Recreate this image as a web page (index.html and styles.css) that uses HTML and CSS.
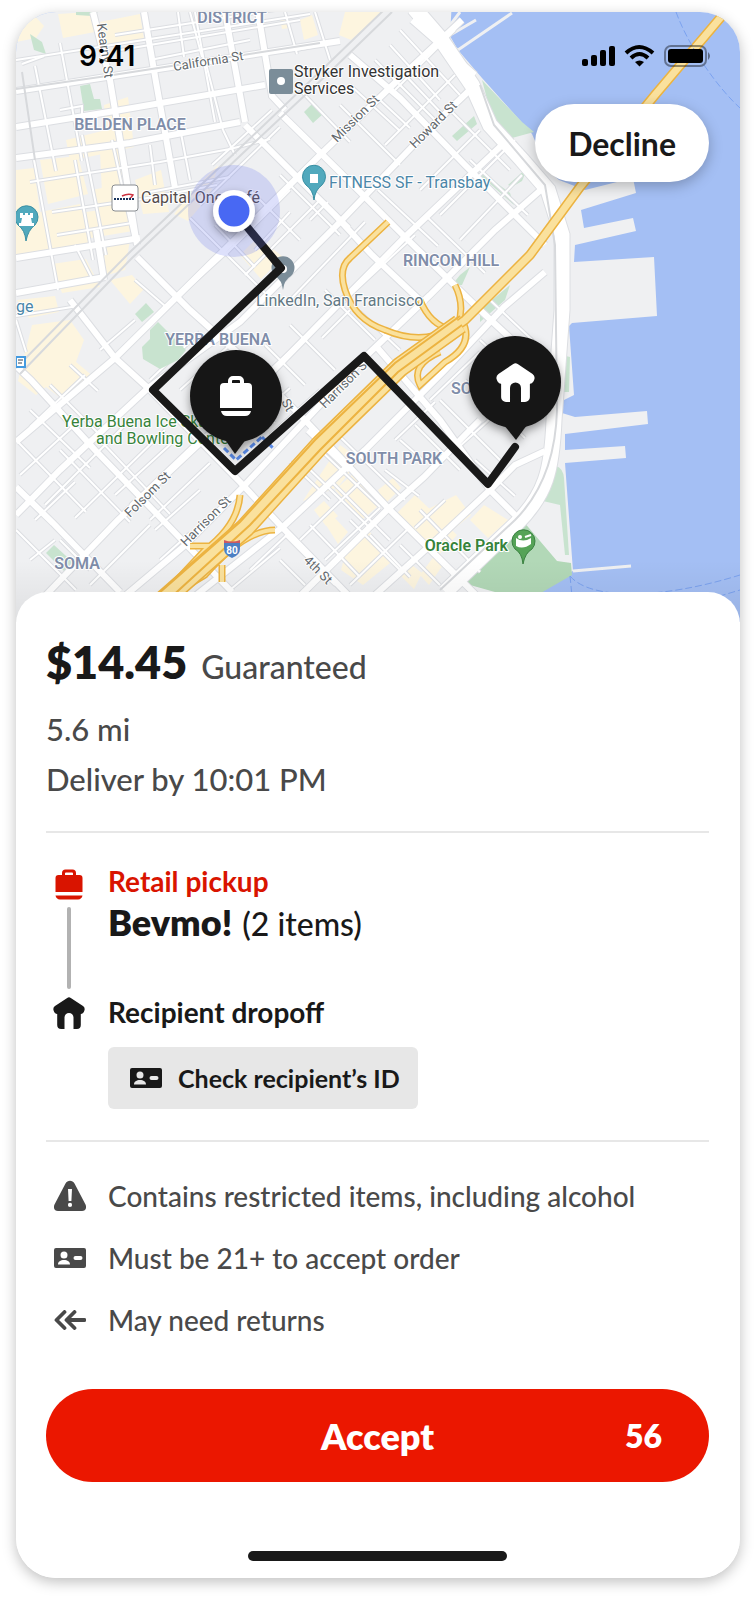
FILE: index.html
```html
<!DOCTYPE html>
<html lang="en">
<head>
<meta charset="utf-8">
<meta name="viewport" content="width=device-width, initial-scale=1">
<title>Delivery offer</title>
<link rel="stylesheet" href="styles.css">
</head>
<body>
<svg class="sprite" aria-hidden="true">
  <symbol id="bag" viewBox="0 0 32 32">
    <path d="M2.500 23V9a3 3 0 0 1 3-3h3.500V4a3.500 3.500 0 0 1 3.500-3.500h7A3.500 3.500 0 0 1 23 4v2h3.500a3 3 0 0 1 3 3v14ZM12 6h8V4.500a1 1 0 0 0-1-1h-6a1 1 0 0 0-1 1ZM2.500 26.500h27a5 5 0 0 1-4.500 4H7a5 5 0 0 1-4.500-4Z" fill="currentColor" fill-rule="evenodd"/>
  </symbol>
  <symbol id="home" viewBox="0 0 32 32">
    <path d="M14.200.9a3 3 0 0 1 3.600 0L30 9a4 4 0 0 1 1.400 4.500C30.800 15.500 29.500 17 27.800 17v11a4 4 0 0 1-4 4H20.500V20.500a4.500 4.500 0 0 0-9 0V32H8.200a4 4 0 0 1-4-4V17C2.500 17 1.200 15.500.6 13.500A4 4 0 0 1 2 9Z" fill="currentColor"/>
  </symbol>
  <symbol id="card" viewBox="0 0 32 20">
    <path d="M2 0h28a2 2 0 0 1 2 2v16a2 2 0 0 1-2 2H2a2 2 0 0 1-2-2V2a2 2 0 0 1 2-2ZM10 3.500a3.500 3.500 0 1 0 0 7a3.500 3.500 0 0 0 0-7ZM4 16.500h12c0-3-2.500-4.500-6-4.500s-6 1.500-6 4.500ZM21.500 8a2 2 0 0 0 0 4h5a2 2 0 0 0 0-4Z" fill="currentColor" fill-rule="evenodd"/>
  </symbol>
  <symbol id="warn" viewBox="0 0 32 32">
    <path d="M11.500 3.500C13.500-.2 18.500-.2 20.500 3.500L31.500 24.500C33 28 31.500 31 28 31H4C.5 31-1 28 .5 24.500ZM14 9l.6 12h2.800L18 9ZM16 22.800a2.100 2.100 0 1 0 0 4.200a2.100 2.100 0 0 0 0-4.200Z" fill="currentColor" fill-rule="evenodd"/>
  </symbol>
  <symbol id="return" viewBox="0 0 32 20">
    <path d="M10.500 2 2.500 10l8 8M20.500 2 12.500 10l8 8M13 10h17.500" fill="none" stroke="currentColor" stroke-width="3.800" stroke-linecap="round" stroke-linejoin="round"/>
  </symbol>
</svg>

<main class="phone">
  <section class="map" aria-label="Delivery route map">
    <svg class="map-art" viewBox="16 12 724 610" preserveAspectRatio="xMidYMin slice" role="img" aria-label="Route through San Francisco">
      <defs>
        <g id="thin">
          <path d="M16 60 150 39 310 14M16 220l20-4M30 182l130-20 70-13 40-10M150 192l80-15M52 212l90-13 75-14M57 235l75-12M16 316l62-10M16 320l10 32M180 128l10 52M205 60l18 70M190 12l12 45M285 12l12 42M150 60l100-20M115 35l160-25M120 50l180-30"/>
          <path d="M60 43l22 118M35 66l21 105M82 135l24 120M34 160l24 130M112 140l22 100M150 145l5 40M22 64l22-8M60 110l22-4 0 12M75 160l18 100M195 12l20 110M178 12l6 45M315 12l15 48M296 50l16-3M75 245l18 35"/>
          <path d="M212 165l60-55M200 205l80-78M225 255l65-65M245 275l75-75M290 300l75-78M255 250l35-38M175 300l60-55M310 220l18-18M345 300l70-65M395 90l60-60M385 145l70-70M420 190l60-60M440 215l75-75M460 240l62-65M380 100l30 28M405 75l40 42M350 85l50 46M300 90l50 52M430 130l60 60M450 110l60 60M470 160l58 55M425 215l60 58M378 190l60 56"/>
          <path d="M235 155l-12-25M210 195l70 70M190 218l75 75M215 225l40 42M250 190l50 50M280 175l60 60M135 280l30 26M340 105l60 60M375 60l60 60M390 45l50 55M400 30l60 65M275 155l75 72"/>
          <path d="M85 375l-55 52M130 420l-85 85M165 430l-90 88M70 365l28 26M50 385l50 50M30 410l60 58M16 440l70 72M100 440l70 74M115 495l60-55M130 505l65-62M150 520l60-57M155 530l45-40M180 390l50-45M195 405l40-36M100 350l35-30M150 380l50-48M60 450l70 72M20 475l60-55M35 520l40-38M90 585l60-60M160 560l30-27M60 540l30 30M16 530l60 60M30 560l25-20"/>
          <path d="M290 325l45 45M265 345l40 40M320 390l-50 45M270 370l48-45M225 375l50 48M350 310l-28 28M375 340l-50-50M400 350l-40-38M230 440l60-52"/>
          <path d="M315 445l65 62M335 432l70 68M300 460l68 66M330 500l-40-38M350 520l50 50M370 535l40 42M300 540l60-58M325 560l55-52M350 585l60-58M285 535l50 50M310 525l50 52M330 480l60 60M385 470l34 26M400 440l25 22M420 510l60 62M400 545l40 40M445 500l-30 28M460 520l-30 30M475 460l40 36M440 400l60 60M465 380l60 58M460 470l-45-45M405 400l60 60M480 340l60 56M490 300l55 52M500 410l-40 36M430 400l50-48M395 440l40-38M250 570l40-38M230 590l50-42M280 560l25 25"/>
        </g>
        <g id="wide">
          <path d="M16 91 100 78 210 61 340 41M16 127 115 111 265 85M16 158 130 143 240 122M16 258 140 238M16 293 105 277"/>
          <path d="M93 12 110 80 125 170 137 245M144 12 156 82 175 188M225 12 245 122M258 12 272 96 285 110M96 230l8 50"/>
          <path d="M16 442 115 358 210 264 320 155 400 78 462 20M16 515 60 470 148 388 240 322 340 222 430 128 475 85M45 596 118 520 235 410 320 323 405 237 502 145M120 600 183 547 243 487 365 357 430 295 495 230 543 188M190 600 285 525 365 450 445 370 504 307 545 272M298 598 387 510 424 477 467 433 480 420M375 595 444 533 490 490 515 465 545 451"/>
          <path d="M70 300 115 358 148 388 240 482 280 525 350 597M16 366 31 380 95 450 155 512 232 592M16 487 53 523 120 592M137 257 190 310 240 355 305 420 390 510 478 597M245 125 335 215 372 255 425 305M280 113 340 172 405 237 480 310 548 373M350 55 400 98 465 165 545 245M308 430 350 470M375 345 440 420 490 490 515 515M412 20 475 75"/>
        </g>
        <path id="embarcadero" d="M414 8 440 38 472 85 490 125 522 160 548 190 562 235 562 310 554 420C552 470 546 495 515 525L445 592"/>
        <path id="freeway" d="M160 603 245 528 320 445 400 367 465 320 530 255 580 187 655 95 727 10"/>
        <path id="ramps" d="M240 495Q238 525 205 550L165 593M275 530Q245 530 205 575L155 605M190 546H228M222 565V582M388 222 350 258Q338 268 345 290Q355 320 385 330Q420 345 450 330M420 300Q430 325 452 330M455 285Q465 305 458 325M462 320Q475 345 445 362L420 385Q410 365 440 352"/>
        <filter id="pinShadow" x="-40%" y="-40%" width="180%" height="190%">
          <feDropShadow dx="0" dy="4" stdDeviation="5" flood-color="#000" flood-opacity=".4"/>
        </filter>
        <linearGradient id="fade" x1="0" y1="0" x2="0" y2="1"><stop offset="0" stop-opacity="0"/><stop offset="1" stop-opacity=".07"/></linearGradient>
      </defs>

      <path class="water" d="M0 0H755V640H0Z"/>
      <path class="land" d="M0 0H452L450 36 458 50 482 78 532 134 548 170 559 180 585 190 633 178 636 193 581 210 584 228 633 218 636 231 575 245 574 262 654 257 657 316 572 323 569 326 574 395 562 401V413L575 417 647 411 648 424 565 434V450L625 446 626 458 565 463 573 571 540 588 500 640H0Z"/>
      <path class="pier" d="M452 34 476 20M450 45 458 50 512 13M448 28 460 12"/>
      <path class="pier" d="M573 571 631 566"/>

      <path class="shop" d="M16 12h15l13 14-8 12-20 4ZM58 14l32-2 5 20-32 6ZM100 22l40-8 4 25-38 8ZM345 12h38l-32 28-12-5ZM300 20l12-5 6 20-14 5ZM280 18l8-2 2 12-8 1ZM40 160l38-4 10 38-40 10ZM66 140l40-10-2-25 24-8 6 50-64 14ZM16 170l18-2 6 44 40-8 12 40-76 12ZM92 190l38-8 5 38-36 8ZM100 152l20-5 10 42-28 4ZM135 180l26-10 8 42-26 2ZM65 215l70-10-2 26-60 10ZM52 264l34-5 14 28-38 6ZM100 245l30-5-5 30-18 5ZM110 280l22-5 12 14-14 15ZM198 185l20-20-8 30-22 26-14-7ZM17 300l38-4 4 16-30 6ZM32 325l38-5 14 20-8 22 18 15-28 25-20-15-10 8-18-14ZM240 255l18-18 25 20-22 22Z"/>
      <path class="shop" d="M310 490l30-45 20 14-22 28-35 14ZM335 490l20-18 28 30-20 17ZM314 510l10-9 14 15-12 10ZM326 525l8-8 14 15-10 12ZM345 555l20-28 30 32-32 26-22-15ZM378 490l15-12 8 10-16 16ZM395 515l20-20 42 40-22 24ZM426 510l30-15 15 20-22 18ZM470 520l14-15 24 15-20 18ZM420 575l15-20 8 10-14 20ZM400 575l12-10 10 8-8 16ZM522 530l42 38-6 6-42-38Z"/>
      <path class="park" d="M30 34l12 8 4 12-12-4ZM76 12h22l-6 4-16-1ZM80 86l10-2 4 15 6 0 2 10-18 2ZM304 112l9-9 10 11-10 9ZM135 314l11-11 8 9-12 10ZM452 136l22-20 3 8-20 17ZM482 80l40 42 12 10-22 6-20-20ZM508 185l20-18-6 14-10 6ZM478 173l36 32-4-12-24-18ZM460 275l10-8-8 18-10 0ZM480 310l30-25-5 15-25 22ZM566 356l4 1-1 35h-5ZM556 466q7 2 8 12l5 77h-4l-5-50-17-4ZM46 553l8-8 22 20-10 8Z"/>
      <path class="park-dark" d="M523 521l34 40 14 2 1 12-45 26-64-18Z"/>

      <use href="#thin" class="case-thin"/>
      <use href="#wide" class="case-wide"/>
      <use href="#embarcadero" class="case-main"/>
      <use href="#thin" class="road-thin"/>
      <path class="park" d="M150 330l8-8 28 28-8 10-18 9-17-10-1-12 8-8Z"/>
      <use href="#wide" class="road-wide"/>
      <use href="#embarcadero" class="road-main"/>
      <path class="rail" d="M16 89 100 77 210 60 320 43M386 8 330 62 240 148 130 252 16 368M392 12 332 70 242 154 132 258 20 374M480 85 494 125 545 185 555 245 557 410Q555 480 515 520L440 590M22 72 35 160"/>
      <use href="#ramps" class="case-ramp"/>
      <use href="#ramps" class="road-ramp"/>
      <path class="case-free-wide" d="M160 603 245 528 320 445 400 367 460 324"/>
      <use href="#freeway" class="case-free"/>
      <path class="free-wide" d="M160 603 245 528 320 445 400 367 460 324"/>
      <use href="#freeway" class="free"/>
      <path class="free-line" d="M168 600 250 525 320 450 398 372 462 325M158 594 240 522 315 440 395 363 460 316"/>
      <path class="ferry" d="M676 12C690 50 720 90 740 108M570 576C590 600 660 600 740 575M570 576l3 30M690 605l50-15"/>
      <path class="trail" d="M224 448l12 12 26-23M262 437l12 12"/>

      <g class="place">
        <text x="232" y="23" text-anchor="middle">DISTRICT</text>
        <text x="130" y="130" text-anchor="middle">BELDEN PLACE</text>
        <text x="451" y="266" text-anchor="middle">RINCON HILL</text>
        <text x="218" y="345" text-anchor="middle">YERBA BUENA</text>
        <text x="394" y="464" text-anchor="middle">SOUTH PARK</text>
        <text x="451" y="394">SOUTH</text>
        <text x="77" y="569" text-anchor="middle">SOMA</text>
      </g>
      <g class="street">
        <text transform="translate(97 24) rotate(82)">Kearny St</text>
        <text transform="translate(174 71) rotate(-9)">California St</text>
        <text transform="translate(337 143) rotate(-45)">Mission St</text>
        <text transform="translate(415 149) rotate(-45)">Howard St</text>
        <text transform="translate(130 518) rotate(-45)">Folsom St</text>
        <text transform="translate(186 547) rotate(-45)">Harrison St</text>
        <text transform="translate(325 409) rotate(-45)">Harrison St</text>
        <text transform="translate(303 561) rotate(45)">4th St</text>
        <text transform="translate(281 402) rotate(60)">St</text>
      </g>
      <g class="poi">
        <text class="ink" x="294" y="77">Stryker Investigation</text>
        <text class="ink" x="294" y="94">Services</text>
        <text class="brown" x="141" y="203">Capital One Café</text>
        <text class="blue" x="329" y="188">FITNESS SF - Transbay</text>
        <text class="slate" x="256" y="306">LinkedIn, San Francisco</text>
        <text class="green" x="62" y="427">Yerba Buena Ice Skating</text>
        <text class="green" x="96" y="444">and Bowling Center</text>
        <text class="green strong" x="508" y="551" text-anchor="end">Oracle Park</text>
        <text class="blue" x="16" y="312">ge</text>
      </g>

      <rect x="269" y="69" width="24" height="25" rx="2" fill="#7b8d99"/><circle cx="281" cy="81" r="4" fill="#fff"/>
      <rect x="112" y="185" width="26" height="26" rx="3" fill="#fff" stroke="#888c90"/>
      <path d="M122 196q6-3 11-1-1 2-4 4" fill="none" stroke="#cc3340" stroke-width="1.500"/><path d="M114 199h20" stroke="#16325b" stroke-width="2" stroke-dasharray="2 1"/>
      <path class="teal" d="M26 241Q25 230 18 225A11.500 11.500 0 1 1 35 225Q28 230 26 241Z"/>
      <path fill="#fff" d="M20 213h3v2h2v-2h3v2h2v-2h3v5h-2l1 5h2v3H19v-3h2l1-5h-2Z"/>
      <path class="teal" d="M314 200Q313 190 306 185A11.500 11.500 0 1 1 322 185Q315 190 314 200Z"/><path d="M310 174h8v9h-8Z" fill="#fff"/>
      <path d="M283 290Q282 280 275 276A11.500 11.500 0 1 1 291 276Q284 280 283 290Z" fill="#7b8d99"/><circle cx="283" cy="269" r="4" fill="#fff"/>
      <path d="M523 564Q522 553 515 549A11.500 11.500 0 1 1 532 549Q525 553 523 564Z" fill="#55a357" stroke="#398140"/>
      <path d="M516 538q7 5 15 0v6q-8 6-15 2Z" fill="#fff"/><circle cx="520" cy="537" r="2" fill="#fff"/><path d="M525 537l6-2" stroke="#fff" stroke-width="2"/>
      <path d="M16 357h9v10h-9Z" fill="#fff" stroke="#459be0" stroke-width="2"/><path d="M18 360h5M18 363h4" stroke="#345"/>
      <path d="M224 543q8-2 16 0v6q0 6-8 9-8-3-8-9Z" fill="#4b7fc4"/><path d="M224 540q8 3 16 0v3h-16Z" fill="#cc5962"/>
      <text class="shield" x="232" y="554" text-anchor="middle">80</text>

      <rect x="16" y="560" width="724" height="62" fill="url(#fade)"/>
      <path class="route" d="M234 211 281 268 153 390 235 471 364 356 488 484 515 447"/>
      <circle cx="234" cy="211" r="46" fill="#6274ee" fill-opacity=".22"/>
      <circle cx="234" cy="211" r="21" fill="#fff" filter="url(#pinShadow)"/><circle cx="234" cy="211" r="15.500" fill="#4868f3"/>
      <g class="pin" filter="url(#pinShadow)"><circle cx="236" cy="396" r="46"/><path d="M224 438h23l-12 16Z"/></g>
      <g class="pin" filter="url(#pinShadow)"><circle cx="515" cy="382" r="46"/><path d="M504 425h23l-11 15Z"/></g>
      <path d="M220 408V387a4 4 0 0 1 4-4h4v-2a5 5 0 0 1 5-5h6a5 5 0 0 1 5 5v2h4a4 4 0 0 1 4 4v21ZM232 383h8v-2q0-1-1-1h-6q-1 0-1 1ZM221 411h30q-1 5-6 5h-18q-5 0-6-5Z" fill="#fff" fill-rule="evenodd"/>
      <use href="#home" x="496" y="363" width="39" height="39" color="#fff"/>
    </svg>

    <div class="status">
      <time class="clock">9:41</time>
      <svg class="status-icons" viewBox="0 0 130 24" aria-label="Signal, Wi-Fi and battery">
        <rect x="0" y="15" width="6" height="7" rx="2"/><rect x="9" y="11" width="6" height="11" rx="2"/><rect x="18" y="6" width="6" height="16" rx="2"/><rect x="27" y="2" width="6" height="20" rx="2"/>
        <path d="M44 9Q57-3 71 9M49 14Q57.500 6 66 14" fill="none" stroke="#000" stroke-width="4"/><path d="M53 18q4.500-3 9 0l-4.500 4.500Z"/>
        <rect x="83" y="2" width="41" height="20" rx="6" fill="none" stroke="#000" stroke-opacity=".4" stroke-width="2"/><rect x="86" y="5" width="35" height="14" rx="3"/><path d="M126 8q4 4 0 8Z" fill-opacity=".45"/>
      </svg>
    </div>
    <button class="decline" type="button">Decline</button>
  </section>

  <section class="sheet">
    <header class="offer">
      <h1 class="pay"><strong class="amount">$14.45</strong> <span>Guaranteed</span></h1>
      <p>5.6 mi</p>
      <p>Deliver by 10:01 PM</p>
    </header>

    <ol class="stops">
      <li class="stop stop-pickup">
        <div class="marker"><svg class="icon red" aria-hidden="true"><use href="#bag"/></svg><span class="connector"></span></div>
        <div><h2 class="label red">Retail pickup</h2><p class="store"><strong>Bevmo!</strong> <span>(2 items)</span></p></div>
      </li>
      <li class="stop">
        <div class="marker"><svg class="icon" aria-hidden="true"><use href="#home"/></svg></div>
        <div><h2 class="label">Recipient dropoff</h2>
          <p class="chip"><svg class="icon icon-flat" aria-hidden="true"><use href="#card"/></svg><span>Check recipient’s ID</span></p></div>
      </li>
    </ol>

    <ul class="notes">
      <li><svg class="icon" aria-hidden="true"><use href="#warn"/></svg><span>Contains restricted items, including alcohol</span></li>
      <li><svg class="icon icon-flat" aria-hidden="true"><use href="#card"/></svg><span>Must be 21+ to accept order</span></li>
      <li><svg class="icon icon-flat" aria-hidden="true"><use href="#return"/></svg><span>May need returns</span></li>
    </ul>

    <button class="accept" type="button"><span class="accept-text">Accept</span><span class="count">56</span></button>
    <div class="home-bar"></div>
  </section>
</main>
</body>
</html>
```
FILE: styles.css
```css
* { box-sizing: border-box; }
body { margin: 0; background: #fff; color: #191919; font-family: Lato, "Open Sans", sans-serif; }
h1, h2, p, ol, ul { margin: 0; padding: 0; font-weight: 500; }
ol, ul { list-style: none; }
button { border: 0; font-family: inherit; cursor: pointer; }
.sprite { position: absolute; width: 0; height: 0; }

.phone { margin: 12px 15px 21px 16px; border-radius: 40px; background: #fff; overflow: hidden; box-shadow: 0 4px 14px rgba(0, 0, 0, .25); }
.map { position: relative; }
.map-art { display: block; width: 100%; height: 610px; }

.status { position: absolute; top: 30px; left: 63px; right: 28px; display: flex; justify-content: space-between; align-items: center; color: #000; }
.clock { font: 600 28px/28px Inter, sans-serif; }
.status-icons { width: 130px; height: 24px; }
.decline { position: absolute; top: 92px; right: 31px; padding: 0 33px; height: 78px; border-radius: 39px; background: #fff; color: #191919; font-size: 32px; font-weight: 700; box-shadow: 0 4px 14px rgba(0, 0, 0, .25); }

.sheet { position: relative; margin-top: -30px; padding: 40px 31px 17px 30px; border-radius: 32px 32px 0 0; background: #fff; }
.offer { padding-bottom: 27px; border-bottom: 2px solid #e7e7e7; color: #494949; font-size: 31px; line-height: 50px; }
.pay { display: flex; align-items: baseline; gap: 14px; margin-bottom: 7px; font-size: 32px; line-height: 60px; }
.amount { color: #191919; font-size: 45px; font-weight: 800; }

.stops { padding: 30px 0 31px; border-bottom: 2px solid #e7e7e7; }
.stop { display: grid; grid-template-columns: 46px 1fr; column-gap: 16px; }
.stop-pickup { min-height: 131px; }
.marker { display: flex; flex-direction: column; align-items: center; gap: 6px; padding-top: 3px; }
.stop-pickup .marker { padding-top: 6px; }
.connector { width: 4px; height: 82px; border-radius: 2px; background: #b2b2b2; }
.icon { display: block; flex: none; width: 32px; height: 32px; }
.icon-flat { height: 20px; }
.red { color: #d91400; }
.label { font-size: 28px; line-height: 36px; font-weight: 700; }
.store { display: flex; align-items: baseline; gap: 10px; font-size: 32px; line-height: 46px; }
.store strong { font-size: 36px; font-weight: 800; }
.chip { display: inline-flex; align-items: center; gap: 16px; margin-top: 17px; padding: 0 18px 0 22px; height: 62px; border-radius: 6px; background: #e7e7e7; font-size: 25px; font-weight: 700; }

.notes { display: grid; gap: 26px; padding: 36px 0 51px 8px; color: #494949; font-size: 28px; line-height: 36px; font-weight: 500; }
.notes li { display: flex; align-items: center; gap: 22px; }

.accept { display: grid; grid-template-columns: 1fr auto 1fr; align-items: center; width: 100%; height: 93px; padding: 0 47px; border-radius: 47px; background: #eb1700; color: #fff; font-weight: 800; }
.accept-text { grid-column: 2; font-size: 36px; }
.count { justify-self: end; font-size: 32px; }
.home-bar { width: 39%; height: 10px; margin: 69px auto 0; border-radius: 5px; background: #191919; }

.water { fill: #a4bff4; }
.land { fill: #eff0f2; }
.pier { fill: none; stroke: #eff0f2; stroke-width: 3; }
.shop { fill: #fdf5df; }
.park { fill: #c8e3cf; }
.park-dark { fill: #b2d8b7; }
.case-thin, .case-wide, .case-main { fill: none; stroke: #dcdee2; }
.case-thin { stroke-width: 4; }
.road-thin { fill: none; stroke: #fff; stroke-width: 2; }
.case-wide { stroke-width: 8; }
.road-wide { fill: none; stroke: #fff; stroke-width: 6; }
.case-main { stroke-width: 17; }
.road-main { fill: none; stroke: #fff; stroke-width: 15; }
.rail { fill: none; stroke: #d7d9dc; stroke-width: 2; }
.case-ramp { fill: none; stroke: #ecb341; stroke-width: 7; }
.road-ramp { fill: none; stroke: #fae19d; stroke-width: 4; }
.case-free, .free, .case-free-wide, .free-wide { fill: none; stroke-linejoin: round; }
.case-free, .case-free-wide { stroke: #ecb341; }
.free, .free-wide { stroke: #fae19d; }
.case-free { stroke-width: 10; }
.free { stroke-width: 7; }
.case-free-wide { stroke-width: 20; }
.free-wide { stroke-width: 17; }
.free-line { fill: none; stroke: #ecb341; stroke-width: 2; }
.ferry { fill: none; stroke: #7ba2ef; stroke-width: 1; stroke-dasharray: 7 3; }
.trail { fill: none; stroke: #5a8be8; stroke-width: 3; stroke-dasharray: 6 3; }
.place, .street, .poi { font-family: Roboto, sans-serif; paint-order: stroke; stroke: #fff; stroke-width: 2px; stroke-linejoin: round; }
.place { fill: #7f8da9; font-size: 16px; font-weight: 600; }
.street { fill: #62686c; font-size: 13px; }
.poi { font-size: 16px; }
.ink { fill: #333; }
.brown { fill: #554c4c; }
.blue { fill: #4a86a8; }
.slate { fill: #627884; }
.green { fill: #37833b; }
.strong { font-weight: 600; }
.teal { fill: #51a9bd; stroke: #398fa3; }
.shield { fill: #fff; font: 700 10px Roboto, sans-serif; }
.route { fill: none; stroke: #191919; stroke-width: 8; stroke-linecap: round; stroke-linejoin: round; }
.pin { fill: #191919; }
```
